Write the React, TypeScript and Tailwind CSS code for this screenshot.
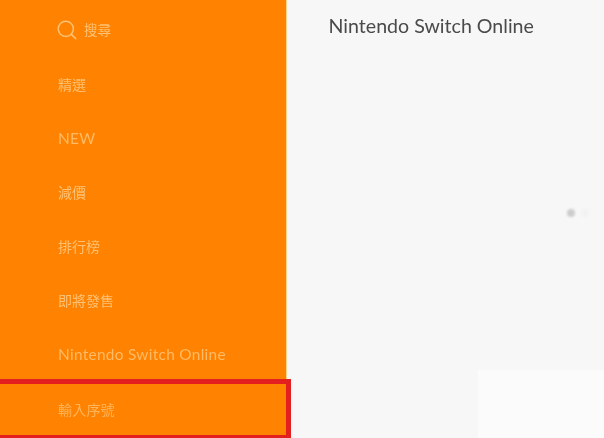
import React from "react";

const items = [
  { t: "精選", latin: false },
  { t: "NEW", latin: true },
  { t: "減價", latin: false },
  { t: "排行榜", latin: false },
  { t: "即將發售", latin: false },
  { t: "Nintendo Switch Online", latin: true },
];
const fontCls = "[font-family:Lato,'Noto_Sans_CJK_TC',sans-serif]";

function Row({ latin, children }: { latin: boolean; children: React.ReactNode }) {
  return (
    <div
      className={`flex h-[54px] items-center pl-[58px] [filter:blur(0.35px)] ${
        latin ? "text-[15.4px] tracking-[0.3px] text-[#ffbb66]" : "pb-[1px] text-[14px] text-[#ffc274]"
      }`}
    >
      {children}
    </div>
  );
}

export default function App() {
  return (
    <div className={`flex h-[438px] w-[604px] overflow-hidden bg-[#f7f7f7] ${fontCls}`}>
      <aside className="relative flex h-full w-[287px] shrink-0 flex-col border-r border-r-[#ffd48a] bg-[#ff8200] pt-[3px]">
        <div className="flex h-[54px] items-center gap-[7px] pl-[57px] text-[13.5px] text-[#ffc274] [filter:blur(0.35px)]">
          <svg width="20" height="20" viewBox="0 0 20 20" fill="none" stroke="#ffc274" strokeWidth="1.5" strokeLinecap="round">
            <circle cx="8.8" cy="8.8" r="7.6" />
            <path d="M14.4 14.4 L18.8 18.8" />
          </svg>
          <span>搜尋</span>
        </div>
        <div className="flex flex-col pt-[1px]">
          {items.map((i) => (
            <Row key={i.t} latin={i.latin}>
              {i.t}
            </Row>
          ))}
        </div>
        <div className="absolute left-[-5px] top-[379px] flex h-[59px] w-[296px] items-center border-x-[5px] border-t-[5px] border-b-[3px] border-[#e3201f] pl-[58px] text-[14.2px] text-[#ffb55c]">
          <span className="[filter:blur(0.35px)]">輸入序號</span>
        </div>
      </aside>
      <main className="relative flex-1 pl-[41.5px] pt-[13px]">
        <h1 className="text-[19.6px] leading-[26px] font-normal text-[#4a4a4a] [filter:blur(0.25px)]">Nintendo Switch Online</h1>
        <div className="absolute left-[280px] top-[209px] h-[8px] w-[8px] rounded-full bg-[#cccccc] [filter:blur(1.2px)]" />
        <div className="absolute left-[294px] top-[209px] h-[8px] w-[8px] rounded-full bg-[#f2f2f2] [filter:blur(1.2px)]" />
        <div className="absolute bottom-0 right-0 h-[68px] w-[126px] bg-[#fbfbfb]" />
      </main>
    </div>
  );
}
